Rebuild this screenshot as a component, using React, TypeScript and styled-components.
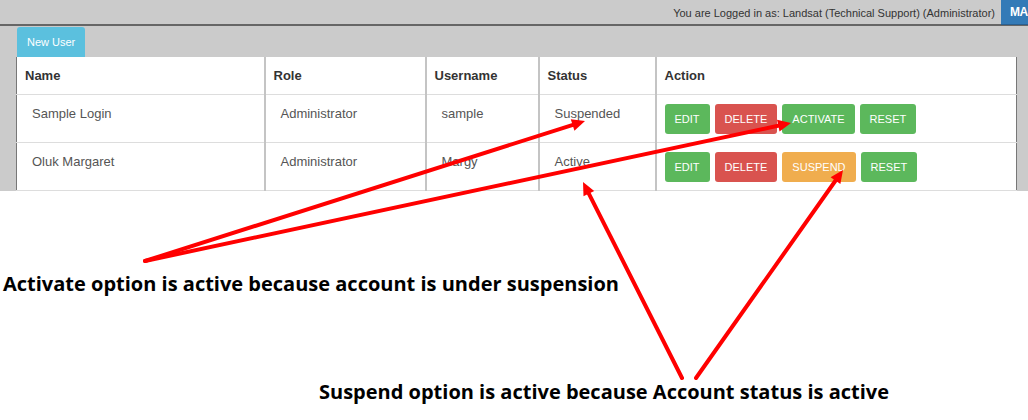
import React from "react";
import styled, { createGlobalStyle } from "styled-components";

const Global = createGlobalStyle`
  html, body { margin: 0; padding: 0; background: #fff; }
  body { font-family: "Liberation Sans", Arial, sans-serif; }
`;

const Page = styled.div`
  position: relative;
  width: 1028px;
  height: 420px;
  overflow: hidden;
  background: #fff;
`;

const TopBar = styled.div`
  display: flex;
  justify-content: flex-end;
  align-items: stretch;
  height: 24px;
  background: #cbcbcb;
  border-bottom: 2px solid #666;
`;

const LoginText = styled.span`
  align-self: center;
  font-size: 11px;
  color: #333;
  margin-right: 6px;
  margin-top: 2px;
`;

const MenuButton = styled.div`
  box-sizing: border-box;
  width: 27px;
  padding-left: 9px;
  height: 25px;
  margin-bottom: -1px;
  display: flex;
  align-items: center;
  background: #337ab7;
  border-bottom: 1px solid #2a5f8f;
  color: #fff;
  font-size: 12px;
  font-weight: bold;
  letter-spacing: -0.5px;
  white-space: nowrap;
`;

const Main = styled.div`
  background: #cbcbcb;
  padding: 1px 11px 0 16px;
`;

const NewUserButton = styled.button`
  display: block;
  margin-left: 1px;
  height: 30px;
  padding: 0 10px;
  border: none;
  border-radius: 3px 3px 0 0;
  background: #5bc0de;
  color: #fff;
  font-family: "Liberation Sans", Arial, sans-serif;
  font-size: 11px;
`;

const Table = styled.table`
  width: 100%;
  border-collapse: collapse;
  background: #fff;
  border-left: 1px solid #777;
  border-right: 1px solid #777;
  table-layout: fixed;
`;

const HeadCell = styled.th<{ $w: number }>`
  box-sizing: border-box;
  width: ${(p) => p.$w}px;
  text-align: left;
  font-size: 13px;
  font-weight: bold;
  color: #333;
  line-height: 20px;
  padding: 9px 8px 8px 8px;
  border-left: 2px solid #c4c4c4;
  border-bottom: 1px solid #ddd;
  &:first-child { border-left: none; }
`;

const Row = styled.tr`
  border-bottom: 1px solid #ddd;
`;

const Cell = styled.td`
  vertical-align: top;
  font-size: 13px;
  color: #555;
  line-height: 20px;
  padding: 9px 8px 8px 15px;
  border-left: 2px solid #c4c4c4;
  &:first-child { border-left: none; }
`;

const ActionCell = styled.td`
  vertical-align: top;
  padding: 9px 8px 8px 8px;
  border-left: 2px solid #c4c4c4;
`;

const Actions = styled.div`
  display: flex;
  gap: 5px;
`;

const colors = {
  green: "#5cb85c",
  red: "#d9534f",
  orange: "#f0ad4e",
};

const ActionButton = styled.button<{ $tone: keyof typeof colors }>`
  height: 30px;
  padding: 0 10px;
  border: none;
  border-radius: 3px;
  background: ${(p) => colors[p.$tone]};
  color: #fff;
  font-family: "Liberation Sans", Arial, sans-serif;
  font-size: 11px;
  text-transform: uppercase;
`;

const Notes = styled.div`
  display: flex;
  flex-direction: column;
`;

const Note = styled.div<{ $top: number; $left: number }>`
  margin-top: ${(p) => p.$top}px;
  padding-left: ${(p) => p.$left}px;
  font-family: "Open Sans", Lato, sans-serif;
  font-weight: bold;
  font-size: 20px;
  line-height: 24px;
  color: #000;
  white-space: nowrap;
`;

const Overlay = styled.svg`
  position: absolute;
  left: 0;
  top: 0;
  pointer-events: none;
`;

type Arrow = [number, number, number, number];

const arrows: Arrow[] = [
  [145, 261, 585, 121],
  [145, 261, 791, 123],
  [682, 378, 583, 182],
  [696, 378, 843, 170],
];

function ArrowShape({ a }: { a: Arrow }) {
  const [x1, y1, x2, y2] = a;
  const dx = x2 - x1;
  const dy = y2 - y1;
  const len = Math.hypot(dx, dy);
  const ux = dx / len;
  const uy = dy / len;
  const head = 13;
  const w = 6;
  const bx = x2 - ux * head;
  const by = y2 - uy * head;
  const px = -uy;
  const py = ux;
  const pts = `${x2},${y2} ${bx + px * w},${by + py * w} ${bx - px * w},${by - py * w}`;
  return (
    <g>
      <line x1={x1} y1={y1} x2={bx + ux * 2} y2={by + uy * 2} stroke="#ff0000" strokeWidth={4} strokeLinecap="round" />
      <polygon points={pts} fill="#ff0000" />
    </g>
  );
}

const users = [
  { name: "Sample Login", role: "Administrator", username: "sample", status: "Suspended", toggle: "Activate", tone: "green" as const },
  { name: "Oluk Margaret", role: "Administrator", username: "Margy", status: "Active", toggle: "Suspend", tone: "orange" as const },
];

export default function App() {
  return (
    <Page>
      <Global />
      <TopBar>
        <LoginText>You are Logged in as: Landsat (Technical Support) (Administrator)</LoginText>
        <MenuButton>MA</MenuButton>
      </TopBar>
      <Main>
        <NewUserButton>New User</NewUserButton>
        <Table>
          <thead>
            <tr>
              <HeadCell $w={248}>Name</HeadCell>
              <HeadCell $w={161}>Role</HeadCell>
              <HeadCell $w={113}>Username</HeadCell>
              <HeadCell $w={117}>Status</HeadCell>
              <HeadCell $w={361}>Action</HeadCell>
            </tr>
          </thead>
          <tbody>
            {users.map((u) => (
              <Row key={u.username}>
                <Cell>{u.name}</Cell>
                <Cell>{u.role}</Cell>
                <Cell>{u.username}</Cell>
                <Cell>{u.status}</Cell>
                <ActionCell>
                  <Actions>
                    <ActionButton $tone="green">Edit</ActionButton>
                    <ActionButton $tone="red">Delete</ActionButton>
                    <ActionButton $tone={u.tone}>{u.toggle}</ActionButton>
                    <ActionButton $tone="green">Reset</ActionButton>
                  </Actions>
                </ActionCell>
              </Row>
            ))}
          </tbody>
        </Table>
      </Main>
      <Notes>
        <Note $top={81} $left={3}>Activate option is active because account is under suspension</Note>
        <Note $top={84} $left={319}>Suspend option is active because Account status is active</Note>
      </Notes>
      <Overlay width={1028} height={420} viewBox="0 0 1028 420">
        {arrows.map((a, i) => (
          <ArrowShape key={i} a={a} />
        ))}
      </Overlay>
    </Page>
  );
}
